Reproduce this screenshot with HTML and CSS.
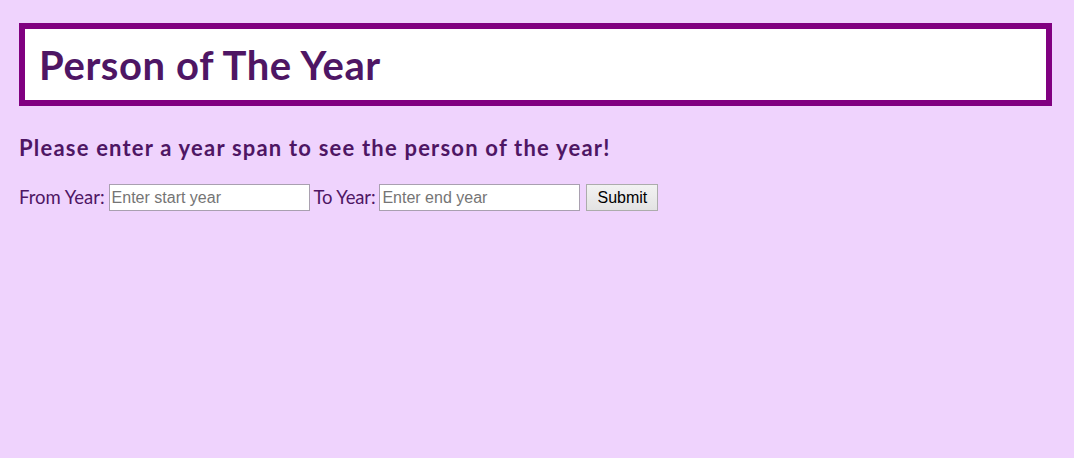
FILE: index.html
```html
<!DOCTYPE html>
<html lang="en">
<head>
<meta charset="utf-8">
<title>Person of The Year</title>
<link rel="stylesheet" href="styles.css">
</head>
<body>
  <header class="banner">
    <h1 class="banner-title">Person of The Year</h1>
  </header>
  <h3 class="prompt">Please enter a year span to see the person of the year!</h3>
  <form class="span-form">
    <label class="span-label" for="from">From Year:</label>
    <input class="span-input" id="from" type="text" placeholder="Enter start year">
    <label class="span-label span-label-to" for="to">To Year:</label>
    <input class="span-input" id="to" type="text" placeholder="Enter end year">
    <button class="span-submit" type="button">Submit</button>
  </form>
</body>
</html>
```
FILE: styles.css
```css
html, body {
  margin: 0;
  padding: 0;
}
body {
  background: #efd3fd;
  padding: 23px 22px 0 19px;
  font-family: Lato, "Open Sans", sans-serif;
  color: #4e1664;
}
.banner {
  border: 6px solid #800080;
  background: #ffffff;
  height: 71px;
  display: flex;
  align-items: center;
  padding-left: 14px;
}
.banner-title {
  margin: 0;
  font-size: 40px;
  font-weight: 700;
  letter-spacing: 0.6px;
  line-height: 1;
}
.prompt {
  margin: 29px 0 0 0;
  font-size: 22px;
  font-weight: 700;
  letter-spacing: 1.2px;
  line-height: 26px;
}
.span-form {
  margin-top: 23px;
  display: flex;
  align-items: center;
  gap: 4px;
}
.span-label {
  font-family: Lato, sans-serif;
  font-size: 18.5px;
  line-height: 27px;
}
.span-label-to {
  letter-spacing: -0.15px;
}
.span-input {
  width: 201px;
  height: 27px;
  box-sizing: border-box;
  border: 1px solid #a9a0b0;
  padding: 1px 2px;
  font-family: "Liberation Sans", Arial, sans-serif;
  font-size: 16px;
  background: #fff;
  color: #222;
}
.span-input::placeholder {
  color: #757575;
}
.span-submit {
  margin-left: 2px;
  width: 72px;
  height: 27px;
  box-sizing: border-box;
  border: 1px solid #acacac;
  border-radius: 0;
  background: linear-gradient(#f2f2f2, #e3e3e3);
  font-family: "Liberation Sans", Arial, sans-serif;
  font-size: 16px;
  color: #000;
  padding: 0;
}
```
